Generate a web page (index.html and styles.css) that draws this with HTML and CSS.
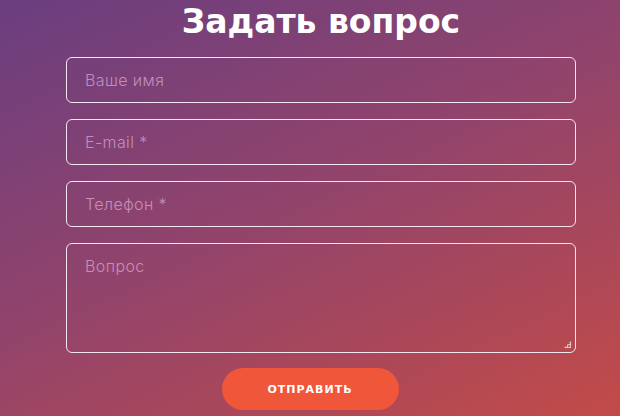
FILE: index.html
```html
<!DOCTYPE html>
<html lang="ru">
<head>
<meta charset="utf-8">
<link rel="stylesheet" href="styles.css">
</head>
<body>
<section class="ask">
  <h2 class="ask__title">Задать вопрос</h2>
  <form class="ask__form">
    <input class="field" type="text" placeholder="Ваше имя">
    <input class="field" type="text" placeholder="E-mail *">
    <input class="field" type="text" placeholder="Телефон *">
    <div class="area-wrap">
      <textarea class="field field--area" placeholder="Вопрос"></textarea>
      <span class="grip"></span>
    </div>
  </form>
</section>
<div class="actions">
  <button class="send" type="button">ОТПРАВИТЬ</button>
</div>
</body>
</html>
```
FILE: styles.css
```css
html, body {
  margin: 0;
  height: 100%;
}
body {
  background: linear-gradient(155deg, #6a3e80 0%, #94446a 50%, #c24b48 100%);
  font-family: "DejaVu Sans", sans-serif;
  overflow: hidden;
}
.ask {
  padding-left: 22px;
  display: flex;
  flex-direction: column;
  align-items: center;
}
.ask__title {
  margin: 0 0 13px;
  height: 44px;
  line-height: 44px;
  font-size: 33px;
  font-weight: 700;
  color: #fff;
}
.ask__form {
  width: 510px;
  display: flex;
  flex-direction: column;
  gap: 16px;
}
.field {
  box-sizing: border-box;
  width: 100%;
  height: 46px;
  border: 1px solid #f4e6f0;
  border-radius: 6px;
  background: transparent;
  padding: 0 18px;
  font-family: "Inter", sans-serif;
  font-weight: 300;
  font-size: 16px;
  letter-spacing: 0.4px;
  color: #fff;
  outline: none;
}
.field::placeholder {
  color: rgba(225, 178, 218, 0.7);
}
.area-wrap {
  position: relative;
  width: 100%;
  height: 110px;
}
.field--area {
  display: block;
  height: 110px;
  padding: 12px 18px;
  resize: none;
}
.grip {
  position: absolute;
  right: 5px;
  bottom: 5px;
  width: 7px;
  height: 7px;
  background:
    radial-gradient(circle, #f4e0e6 0.9px, transparent 1.1px) 0 0 / 2.5px 2.5px;
  clip-path: polygon(100% 0, 100% 100%, 0 100%);
}
.actions {
  display: flex;
  justify-content: center;
  padding-top: 15px;
}
.send {
  width: 177px;
  height: 42px;
  border: none;
  border-radius: 21px;
  background: #f0563a;
  color: #fff;
  font-family: "DejaVu Sans", sans-serif;
  font-weight: 700;
  font-size: 11px;
  letter-spacing: 1px;
}
```
